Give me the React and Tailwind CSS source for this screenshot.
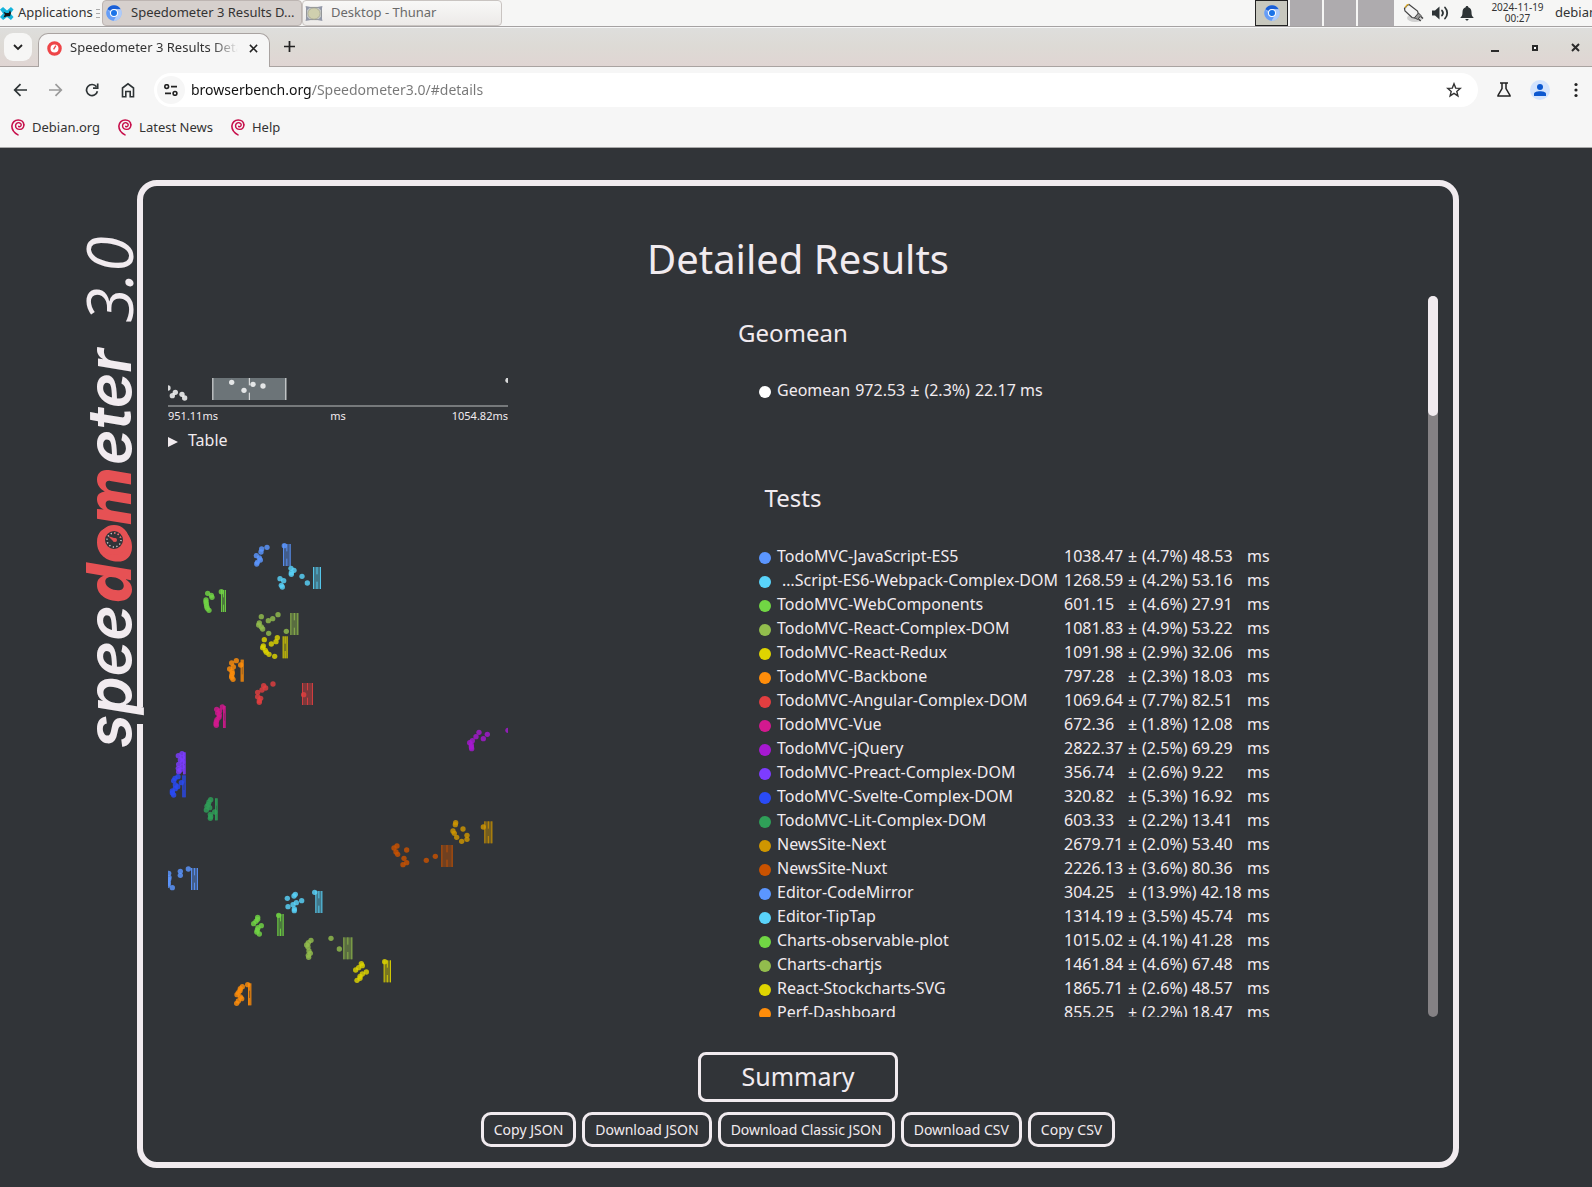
import React from "react";

const tests = [
  { name: "TodoMVC-JavaScript-ES5", value: "1038.47", delta: "(4.7%) 48.53", color: "#5b96ff", band: [399, 422, 42], dots: [[351, 52], [335, 57], [333, 66], [319, 77], [328, 84], [331, 90], [322, 97], [320, 102], [403, 47]] },
  { name: "…Script-ES6-Webpack-Complex-DOM", clipped: true, value: "1268.59", delta: "(4.2%) 53.16", color: "#59d3fa", band: [489, 513, 111], dots: [[423, 115], [432, 121], [424, 128], [424, 133], [456, 139], [472, 159], [390, 146], [401, 152], [394, 166], [397, 171]] },
  { name: "TodoMVC-WebComponents", value: "601.15", delta: "(4.6%) 27.91", color: "#71d644", band: [213, 228, 180], dots: [[173, 190], [184, 196], [186, 202], [168, 210], [168, 216], [169, 222], [170, 229], [172, 235], [177, 241], [214, 185]] },
  { name: "TodoMVC-React-Complex-DOM", value: "1081.83", delta: "(4.9%) 53.22", color: "#92bd4d", band: [421, 445, 249], dots: [[384, 254], [334, 260], [368, 266], [355, 272], [328, 279], [326, 285], [334, 291], [338, 297], [409, 304], [356, 310]] },
  { name: "TodoMVC-React-Redux", value: "1091.98", delta: "(2.9%) 32.06", color: "#ded400", band: [398, 413, 319], dots: [[382, 323], [343, 329], [378, 335], [364, 342], [340, 348], [338, 353], [346, 361], [349, 367], [357, 373], [374, 379]] },
  { name: "TodoMVC-Backbone", value: "797.28", delta: "(2.3%) 18.03", color: "#ff8d0a", band: [272, 281, 389], dots: [[259, 392], [245, 399], [272, 405], [250, 411], [239, 417], [246, 424], [247, 430], [245, 437], [245, 442], [249, 448]] },
  { name: "TodoMVC-Angular-Complex-DOM", value: "1069.64", delta: "(7.7%) 82.51", color: "#e23e40", band: [456, 489, 459], dots: [[369, 462], [341, 467], [347, 474], [336, 480], [323, 487], [461, 494], [323, 500], [332, 505], [328, 512], [328, 517]] },
  { name: "TodoMVC-Vue", value: "672.36", delta: "(1.8%) 12.08", color: "#d3198f", band: [219, 227, 528], dots: [[217, 531], [200, 538], [209, 543], [203, 549], [208, 555], [207, 562], [201, 569], [199, 575], [198, 581], [199, 586]] },
  { name: "TodoMVC-jQuery", value: "2822.37", delta: "(2.5%) 69.29", color: "#a619d1", band: [1096, 1124, 598], dots: [[1074, 601], [987, 607], [1012, 613], [978, 620], [1000, 626], [967, 632], [959, 638], [964, 645], [964, 651], [965, 656]] },
  { name: "TodoMVC-Preact-Complex-DOM", value: "356.74", delta: "(2.6%) 9.22", color: "#7d3cff", band: [99, 107, 667], dots: [[96, 671], [85, 677], [97, 683], [91, 690], [98, 696], [86, 703], [97, 709], [85, 715], [91, 720], [86, 725]] },
  { name: "TodoMVC-Svelte-Complex-DOM", value: "320.82", delta: "(5.3%) 16.92", color: "#2a4bf5", band: [97, 107, 736], dots: [[84, 740], [75, 745], [71, 752], [94, 758], [76, 765], [83, 770], [76, 776], [67, 783], [67, 789], [71, 795]] },
  { name: "TodoMVC-Lit-Complex-DOM", value: "603.33", delta: "(2.2%) 13.41", color: "#2f9f58", band: [195, 203, 805], dots: [[182, 809], [177, 816], [175, 823], [171, 829], [179, 833], [169, 840], [194, 846], [181, 853], [182, 860], [181, 865]] },
  { name: "NewsSite-Next", value: "2679.71", delta: "(2.0%) 53.40", color: "#cf9600", band: [1003, 1027, 874], dots: [[917, 878], [916, 884], [1000, 891], [939, 897], [909, 903], [913, 910], [951, 916], [920, 922], [951, 928], [935, 934]] },
  { name: "NewsSite-Nuxt", value: "2226.13", delta: "(3.6%) 80.36", color: "#c95200", band: [874, 908, 945], dots: [[741, 948], [732, 954], [770, 960], [738, 966], [743, 973], [856, 979], [762, 985], [829, 991], [770, 998], [759, 1004]] },
  { name: "Editor-CodeMirror", value: "304.25", delta: "(13.9%) 42.18", color: "#5b96ff", band: [123, 144, 1014], dots: [[115, 1017], [91, 1024], [56, 1030], [91, 1036], [57, 1042], [56, 1048], [54, 1054], [55, 1060], [54, 1066], [67, 1073]] },
  { name: "Editor-TipTap", value: "1314.19", delta: "(3.5%) 45.74", color: "#59d3fa", band: [496, 517, 1083], dots: [[494, 1087], [436, 1093], [432, 1098], [412, 1105], [455, 1112], [439, 1118], [429, 1124], [414, 1130], [433, 1137], [433, 1142]] },
  { name: "Charts-observable-plot", value: "1015.02", delta: "(4.1%) 41.28", color: "#71d644", band: [382, 401, 1152], dots: [[386, 1156], [323, 1162], [323, 1168], [318, 1174], [311, 1181], [334, 1187], [324, 1193], [322, 1200], [320, 1206], [328, 1212]] },
  { name: "Charts-chartjs", value: "1461.84", delta: "(4.6%) 67.48", color: "#92bd4d", band: [580, 607, 1222], dots: [[543, 1225], [483, 1231], [475, 1238], [470, 1245], [474, 1251], [568, 1257], [477, 1263], [481, 1270], [475, 1276], [476, 1282]] },
  { name: "React-Stockcharts-SVG", value: "1865.71", delta: "(2.6%) 48.57", color: "#ded400", band: [701, 723, 1291], dots: [[704, 1295], [634, 1301], [637, 1307], [626, 1313], [617, 1320], [649, 1326], [637, 1332], [630, 1339], [630, 1345], [621, 1351]] },
  { name: "Perf-Dashboard", value: "855.25", delta: "(2.2%) 18.47", color: "#ff8d0a", band: [294, 304, 1360], dots: [[293, 1364], [277, 1370], [271, 1376], [270, 1382], [265, 1388], [261, 1394], [271, 1401], [275, 1406], [265, 1413], [260, 1420]] },
];

const geomean = { color: "#ffffff", band: [187, 409, 54], dots: [[54, 84], [76, 97], [67, 107], [96, 103], [104, 114], [245, 67], [282, 91], [309, 73], [339, 78], [1074, 61]] };

function Series({ color, band: [x1, x2, y], dots, fill = color, fillOpacity = 0.42 }) {
  const mid = (x1 + x2) / 2;
  return (
    <g>
      <rect x={x1} y={y} width={x2 - x1} height="66" fill={fill} opacity={fillOpacity} />
      <g stroke={color} strokeWidth="3" opacity="0.85">
        <path d={`M${x1 + 1.5} ${y}v66M${x2 - 1.5} ${y}v66M${mid} ${y}v22M${mid} ${y + 44}v22`} />
      </g>
      {dots.map(([cx, cy], i) => (
        <circle key={i} cx={cx} cy={cy} r="8" fill={color} opacity="0.82" />
      ))}
    </g>
  );
}

function Chromium({ className }) {
  return (
    <svg viewBox="0 0 48 48" className={className} aria-hidden="true">
      <circle cx="24" cy="24" r="23" fill="#8ab4f8" />
      <path d="M4 12.500A23 23 0 0 1 44 12.500H24A11.500 11.500 0 0 0 14 18z" fill="#1a5fd6" />
      <path d="M4 12.500A23 23 0 0 0 23 47l10-17a11.500 11.500 0 0 1-19-.5z" fill="#669df6" />
      <path d="M44 12.500A23 23 0 0 1 23 47l11-17.500A11.500 11.500 0 0 0 33 16l-9-3.500z" fill="#aecbfa" />
      <circle cx="24" cy="24" r="12" fill="#fff" />
      <circle cx="24" cy="24" r="9" fill="#1a73e8" />
    </svg>
  );
}

function Swirl() {
  return (
    <svg viewBox="0 0 16 18" className="h-[17px] w-4" fill="none" stroke="#c70f4b" strokeLinecap="round" aria-hidden="true">
      <path d="M8 16.800C4 14.800 1.500 11.500 1.500 7.500 1.700 3.500 4.800 1 8.200 1c3.600 0 6 2.300 6 5.400" strokeWidth="1.700" />
      <path d="M14.200 6c0 3-2 4.800-4.300 5C7.300 11.200 5.300 9.400 5.400 7.200 5.500 5 7.300 3.700 9 3.900c1.700.2 2.600 1.500 2.300 2.900-.3 1.300-1.800 1.700-2.600 1" strokeWidth="1.500" />
    </svg>
  );
}

function Taskbar() {
  return (
    <header className="flex h-[27px] items-stretch overflow-hidden border-b border-[#a5a2a2] bg-[#f6f6f5] text-[13px] text-[#333]">
      <button className="flex w-[94px] shrink-0 items-center gap-1 whitespace-nowrap">
        <svg viewBox="0 0 16 16" className="h-[15px] w-[14px]" aria-hidden="true">
          <path d="M0 3.500 3.500.500 8 4.500 12.500.500 15.500 3.500 12 8l3.500 4-3 3.500L8 12l-4.500 3.500L0 12l3.500-4z" fill="#14b4dc" />
          <path d="M4 6 7 7.500h3L11.500 4l1 3.500-1 3.500H8l-4 1.500L5.500 9z" fill="#111" />
        </svg>
        Applications
      </button>
      <span className="flex w-2 shrink-0 flex-col justify-center gap-[3px] pl-[2px] pr-[2px]">
        <i className="h-px bg-[#aaa]" />
        <i className="h-px bg-[#aaa]" />
        <i className="h-px bg-[#aaa]" />
      </span>
      <button className="flex w-[200px] shrink-0 items-center gap-[9px] whitespace-nowrap rounded border border-[#bdb5b2] bg-[#d6d0cd] pl-[3px] text-left">
        <Chromium className="h-4 w-4 shrink-0" />
        Speedometer 3 Results D...
      </button>
      <button className="flex w-[200px] shrink-0 items-center gap-2 whitespace-nowrap rounded border border-[#c9c4c1] bg-linear-to-b from-[#f8f8f7] to-[#eceae8] pl-[2px] text-[#6a6a6a]">
        <svg viewBox="0 0 18 16" className="h-[15px] w-[18px]" aria-hidden="true">
          <path d="M1 1.500h16v13H1z" fill="#c4c7c9" stroke="#8d9093" />
          <path d="m0 0 5 1-4 4zM18 0l-5 1 4 4zM0 16l5-1-4-4zM18 16l-5-1 4-4z" fill="#9298a8" />
          <ellipse cx="9" cy="8" rx="6.500" ry="6" fill="#cfcfae" stroke="#9c9c84" strokeWidth=".6" />
        </svg>
        Desktop - Thunar
      </button>
      <div className="ml-auto flex shrink-0 items-stretch">
        <div className="flex items-stretch gap-[2px]">
          <button aria-label="Workspace 1" className="grid w-[33px] place-items-center border border-[#222] bg-[#c8c8be]">
            <Chromium className="h-4 w-4" />
          </button>
          <button aria-label="Workspace 2" className="w-8 bg-[#aeabae]" />
          <button aria-label="Workspace 3" className="w-8 bg-[#aeabae]" />
          <button aria-label="Workspace 4" className="w-9 bg-[#aeabae]" />
        </div>
        <div className="flex items-center pl-2">
          <button aria-label="Power" className="mr-[7px]">
            <svg viewBox="0 0 22 20" className="h-5 w-[22px]" aria-hidden="true">
              <ellipse cx="13" cy="15" rx="8" ry="4" fill="#d0d0d0" />
              <path d="M2.500 5.500 5 2.500l2-1 8.500 6.500 1 3-3.500 4-3-.5L3 8z" fill="#f4f4f4" stroke="#444" strokeWidth="1.200" />
              <path d="m12.500 14.500 4-4.500 2.500 2.500-3.500 4z" fill="#999" stroke="#444" />
              <path d="m16.500 16 2.200 2M18.800 13.500l2.200 2" stroke="#444" strokeWidth="1.500" />
              <path d="m3 4.500 2.200-2.700 1.500-.5" stroke="#e0b030" strokeWidth="1.200" fill="none" />
            </svg>
          </button>
          <button aria-label="Volume" className="mr-[11px]">
            <svg viewBox="0 0 18 16" className="h-4 w-[18px]" fill="none" stroke="#2e3436" strokeWidth="1.800" strokeLinecap="round" aria-hidden="true">
              <path d="M1 5.500h3L8.500 1.500v13L4 10.500H1z" fill="#2e3436" stroke="none" />
              <path d="M11 5.500a4 4 0 0 1 0 5" />
              <path d="M14 2.500a8 8 0 0 1 0 11" />
            </svg>
          </button>
          <button aria-label="Notifications" className="mr-4">
            <svg viewBox="0 0 14 16" className="h-4 w-[14px]" fill="#2e3436" aria-hidden="true">
              <path d="M7 1c.8 0 1.300.5 1.300 1.200C10.500 3 11.500 4.700 11.500 7c0 3 .5 4.200 2 5.500V13H.500v-.5C2 11.200 2.500 10 2.500 7c0-2.300 1-4 3.200-4.800C5.700 1.500 6.200 1 7 1zM5.300 14h3.400c-.2.900-.8 1.500-1.700 1.500S5.500 14.900 5.300 14z" />
            </svg>
          </button>
          <time className="flex w-[55px] flex-col items-center whitespace-nowrap text-[10px] leading-[11px]">
            <span>2024-11-19</span>
            <span>00:27</span>
          </time>
          <span className="ml-[10px] w-[37px] whitespace-nowrap">debian</span>
        </div>
      </div>
    </header>
  );
}

function TabStrip() {
  return (
    <div className="mt-px flex h-[39px] items-end border-b border-[#a9a3a1] bg-linear-to-b from-[#dededc] via-[#dddad5] to-[#e0d5d3] text-[13px] text-[#333]">
      <button aria-label="Search tabs" className="mb-[5px] ml-1 grid h-7 w-7 place-items-center rounded-[9px] bg-[#f6f6f5]">
        <svg viewBox="0 0 10 10" className="h-[10px] w-[10px]" fill="none" stroke="#222" strokeWidth="1.800" aria-hidden="true">
          <path d="m1 3 4 4 4-4" />
        </svg>
      </button>
      <div className="-mb-px ml-[6px] flex h-[34px] w-[232px] items-center rounded-t-[10px] border border-b-0 border-[#a9a3a1] bg-[#f6f6f6] pb-[5px] pl-2">
        <svg viewBox="0 0 16 16" className="h-[15px] w-[15px] shrink-0" aria-hidden="true">
          <circle cx="8" cy="8" r="6" fill="#fff" stroke="#ee4548" strokeWidth="3.500" />
          <path d="m7 9 2.500-4" stroke="#ee4548" strokeWidth="1.400" />
        </svg>
        <span className="ml-2 w-[168px] overflow-hidden whitespace-nowrap mask-r-from-85% mask-r-to-100%">Speedometer 3 Results Details</span>
        <button aria-label="Close tab" className="ml-[11px]">
          <svg viewBox="0 0 10 10" className="h-[9px] w-[9px]" stroke="#222" strokeWidth="1.700" aria-hidden="true">
            <path d="m1 1 8 8M9 1 1 9" />
          </svg>
        </button>
      </div>
      <button aria-label="New tab" className="mb-[14px] ml-[14px]">
        <svg viewBox="0 0 12 12" className="h-[11px] w-[11px]" stroke="#222" strokeWidth="1.900" aria-hidden="true">
          <path d="M6 0v12M0 6h12" />
        </svg>
      </button>
      <div className="mb-[14px] ml-auto mr-3 flex gap-[31px]">
        <button aria-label="Minimize">
          <svg viewBox="0 0 9 9" className="h-[9px] w-[9px]" aria-hidden="true"><path d="M0 7h8v2H0z" fill="#2a2a2a" /></svg>
        </button>
        <button aria-label="Maximize">
          <svg viewBox="0 0 9 9" className="h-[9px] w-[9px]" aria-hidden="true"><path d="M2 3h4v4H2z" fill="#fff" stroke="#2a2a2a" strokeWidth="2" /></svg>
        </button>
        <button aria-label="Close">
          <svg viewBox="0 0 9 9" className="h-[9px] w-[9px]" aria-hidden="true"><path d="m1 1 7 7M8 1 1 8" stroke="#2a2a2a" strokeWidth="2" /></svg>
        </button>
      </div>
    </div>
  );
}

function Toolbar() {
  return (
    <nav className="flex h-[45px] items-center bg-[#f6f6f6] pl-[13px] pr-[14px] text-[#2e3436]">
      <button aria-label="Back">
        <svg viewBox="0 0 14 14" className="h-[14px] w-[14px]" fill="none" stroke="currentColor" strokeWidth="1.700" aria-hidden="true"><path d="M14 7H2M7.500 1.200 1.700 7l5.800 5.800" /></svg>
      </button>
      <button aria-label="Forward" className="ml-[22px] text-[#9a9a9a]">
        <svg viewBox="0 0 14 14" className="h-[14px] w-[14px]" fill="none" stroke="currentColor" strokeWidth="1.700" aria-hidden="true"><path d="M0 7h12M6.500 1.200 12.300 7l-5.800 5.800" /></svg>
      </button>
      <button aria-label="Reload" className="ml-[22px]">
        <svg viewBox="0 0 14 14" className="h-[14px] w-[14px]" fill="none" stroke="currentColor" strokeWidth="1.700" aria-hidden="true"><path d="M12.400 8.200A5.500 5.500 0 1 1 11.500 3.800M12.700.5v4.700H8" /></svg>
      </button>
      <button aria-label="Home" className="ml-[22px]">
        <svg viewBox="0 0 14 16" className="h-4 w-[14px]" fill="none" stroke="currentColor" strokeWidth="1.600" aria-hidden="true"><path d="M1.500 6 7 1.800 12.500 6v8.700H9.200V9.500H4.800v5.200H1.500z" /></svg>
      </button>
      <div className="ml-[19px] flex h-[34px] flex-1 items-center rounded-full bg-white pl-[3px] pr-4">
        <button aria-label="View site information" className="grid h-7 w-7 place-items-center rounded-full bg-[#f6f6f6]">
          <svg viewBox="0 0 14 12" className="h-3 w-[14px]" fill="none" stroke="#222" strokeWidth="1.600" aria-hidden="true"><circle cx="2.700" cy="2.600" r="1.900" /><path d="M7 2.600h6M1 9.400h6" /><circle cx="11" cy="9.400" r="1.900" /></svg>
        </button>
        <input
          aria-label="Address"
          defaultValue="browserbench.org/Speedometer3.0/#details"
          className="ml-[6px] min-w-0 flex-1 bg-[linear-gradient(to_right,#111_121px,#777_121px)] bg-clip-text text-sm text-transparent outline-none"
        />
        <button aria-label="Bookmark this tab">
          <svg viewBox="0 0 16 16" className="h-4 w-4" fill="none" stroke="#333" strokeWidth="1.400" aria-hidden="true"><path d="m8 1.800 1.700 4.300 4.600.3-3.500 3 1.100 4.500L8 11.400l-3.900 2.500 1.100-4.500-3.500-3 4.600-.3z" /></svg>
        </button>
      </div>
      <button aria-label="Labs" className="ml-[19px]">
        <svg viewBox="0 0 14 15" className="h-[15px] w-[14px]" fill="none" stroke="#222" strokeWidth="1.500" aria-hidden="true"><path d="M3 1h8M5 1v5.500L1 13.500v.5h12v-.5L9 6.500V1" /></svg>
      </button>
      <button aria-label="Profile" className="ml-[19px] grid h-5 w-5 place-items-center rounded-full bg-[#d3e3fd]">
        <svg viewBox="0 0 12 12" className="h-3 w-3" fill="#0b57d0" aria-hidden="true"><circle cx="6" cy="3" r="3" /><path d="M0 12V9.800C0 8 3 7.200 6 7.200s6 .8 6 2.600V12z" /></svg>
      </button>
      <button aria-label="Menu" className="ml-6">
        <svg viewBox="0 0 4 16" className="h-4 w-1" fill="#222" aria-hidden="true"><circle cx="2" cy="2.500" r="1.600" /><circle cx="2" cy="8" r="1.600" /><circle cx="2" cy="13.500" r="1.600" /></svg>
      </button>
    </nav>
  );
}

function Logo() {
  return (
    <svg viewBox="0 0 80 524" className="absolute -left-[70px] top-[44px] h-[524px] w-20 overflow-visible" role="img" aria-label="speedometer 3.0">
      <path d="M62 477h10v17H62z" fill="#313438" />
      <g fill="#f1ebef" fontFamily="Inter, sans-serif" fontStyle="italic" fontSize="61" fontWeight="600">
        <text transform="translate(58 518) rotate(-90)">spee</text>
        <text transform="translate(58 373) rotate(-90)" fill="#e65154" fontSize="62" fontWeight="800">dom</text>
        <text transform="translate(58 235) rotate(-90)">eter</text>
        <text transform="translate(60 93) rotate(-90)" fontFamily="Open Sans, sans-serif" fontWeight="400" fontSize="64">3.0</text>
      </g>
      <circle cx="41" cy="310" r="12" fill="#313438" stroke="#e65154" strokeWidth="6" />
      <g fill="none" strokeWidth="1.400" strokeDasharray="1.200 2.470">
        <circle cx="41" cy="310" r="7" stroke="#d8d4d6" />
        <path d="M41 303a7 7 0 0 1 7 7" stroke="#e65154" />
      </g>
      <path d="m35 306 7.500 2.500-1.500 3.500z" fill="#e65154" />
      <circle cx="42" cy="310" r="2" fill="#e65154" />
    </svg>
  );
}

const exportLabels = ["Copy JSON", "Download JSON", "Download Classic JSON", "Download CSV", "Copy CSV"];

export default function App() {
  return (
    <div className="flex h-screen flex-col overflow-hidden bg-[#f6f6f6] font-['Noto_Sans',sans-serif]">
      <Taskbar />
      <TabStrip />
      <Toolbar />
      <div className="flex h-9 shrink-0 items-start gap-[17px] border-b border-[#a9a9a9] pl-[10px] pt-[6px] text-[13px] text-[#333]">
        {["Debian.org", "Latest News", "Help"].map((label) => (
          <a key={label} href="#details" className="flex items-center gap-[6px]">
            <Swirl />
            {label}
          </a>
        ))}
      </div>
      <main className="flex min-h-0 flex-1 flex-col bg-[#313438] pb-[19px] pl-[137px] pr-[133px] pt-8 text-[#f1ebef]">
        <section className="relative flex min-h-0 flex-1 flex-col rounded-[20px] border-[6px] border-[#f1ebef] pb-[15px] pl-[25px] pr-[15px] pt-[45px]">
          <Logo />
          <h1 className="mb-[9px] pr-[10px] text-center text-[40px] leading-[56px]">Detailed Results</h1>
          <div className="flex min-h-0 flex-1 gap-[10px]">
            <div className="min-w-0 flex-1 overflow-hidden">
              <h2 className="mb-[29px] mt-[21px] text-center text-2xl">Geomean</h2>
              <div className="grid h-[74px] grid-cols-[591fr_659fr]">
                <div className="w-[340px]">
                  <svg viewBox="54 54 1020 90" className="h-[30px] w-[340px]" role="img" aria-label="Geomean distribution">
                    <Series {...geomean} fill="#a8b4b8" fillOpacity={0.5} />
                    <path d="M54 138h1020" stroke="#76797b" strokeWidth="6" />
                  </svg>
                  <div className="grid grid-cols-3 text-[11px] leading-4">
                    <span>951.11ms</span>
                    <span className="text-center">ms</span>
                    <span className="text-right">1054.82ms</span>
                  </div>
                  <details className="mt-1">
                    <summary className="flex items-center gap-[10px]">
                      <svg viewBox="0 0 10 10" className="mt-[3px] h-[10px] w-[10px]" aria-hidden="true"><path d="M0 0v10l10-5z" fill="#f1ebef" /></svg>
                      Table
                    </summary>
                  </details>
                </div>
                <p className="flex h-6 items-center gap-[5px]">
                  <i className="mr-px mt-[3px] h-3 w-3 rounded-full bg-white" />
                  <span>Geomean</span>
                  <span>972.53</span>
                  <span>±</span>
                  <span>(2.3%)</span>
                  <span>22.17 ms</span>
                </p>
              </div>
              <h2 className="mb-4 mt-[30px] text-center text-2xl">Tests</h2>
              <div className="grid grid-cols-[591fr_659fr]">
                <svg viewBox="54 0 1020 1461" className="h-[487px] w-[340px]" role="img" aria-label="Test distributions">
                  {tests.map((t) => (
                    <Series key={t.name} color={t.color} band={t.band} dots={t.dots} />
                  ))}
                </svg>
                <table className="mt-[14px] h-fit w-fit border-collapse whitespace-nowrap leading-6">
                  <tbody>
                    {tests.map((t) => (
                      <tr key={t.name}>
                        <td className="w-[18px] p-0">
                          <i className="mt-[3px] block h-3 w-3 rounded-full" style={{ backgroundColor: t.color }} />
                        </td>
                        <td className={t.clipped ? "w-[287px] p-0 pr-[6px] text-right" : "w-[287px] p-0 text-left"}>{t.name}</td>
                        <td className="w-[64px] p-0">{t.value}</td>
                        <td className="w-[14px] p-0">±</td>
                        <td className="w-[105px] p-0">{t.delta}</td>
                        <td className="p-0">ms</td>
                      </tr>
                    ))}
                  </tbody>
                </table>
              </div>
            </div>
            <div className="w-[10px] rounded-full bg-[#848184]">
              <div className="h-[120px] rounded-full bg-[#f1ebef]" />
            </div>
          </div>
          <div className="mt-[35px] flex flex-col items-center gap-[10px] pr-[10px]">
            <button className="h-[50px] w-[200px] rounded-lg border-[3px] border-[#f1ebef] text-[25px]">Summary</button>
            <div className="flex gap-[6px]">
              {exportLabels.map((label) => (
                <button key={label} className="h-[35px] rounded-[10px] border-[3px] border-[#f1ebef] px-[10px] text-sm">
                  {label}
                </button>
              ))}
            </div>
          </div>
        </section>
      </main>
    </div>
  );
}
